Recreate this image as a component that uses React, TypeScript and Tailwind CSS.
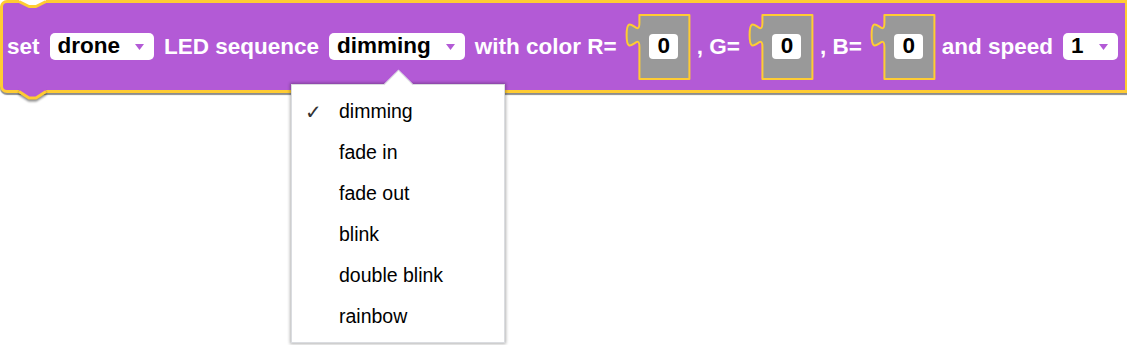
import React from "react"

const PURPLE = "#b35ad6"

function Dropdown({ label }: { label: string }) {
  return (
    <div className="flex h-[27px] shrink-0 items-center rounded-[5px] bg-white pl-[8px] pr-[10px] text-black">
      <span className="leading-none">{label}</span>
      <svg className="ml-[15px]" width="9" height="6" viewBox="0 0 9 6">
        <path d="M0 0 L9 0 L4.5 6 Z" fill={PURPLE} />
      </svg>
    </div>
  )
}

function Slot() {
  return (
    <div className="relative -mr-[2px] flex h-[64px] w-[62px] shrink-0 items-center justify-center pl-[12px]">
      <svg className="absolute left-0 top-0 overflow-visible" width="62" height="64" viewBox="-7.75 0 38.75 40">
        <path
          d="M 0,0 V 5 c 0,10 -8,-8 -8,7.5 s 8,-2.5 8,7.5 V 40 H 31.25 V 0 Z"
          fill="#999999"
          stroke="#ffcc33"
          strokeWidth="1.25"
          strokeLinejoin="round"
        />
      </svg>
      <div className="relative flex h-[25px] w-[29px] items-center justify-center rounded-[4px] bg-white leading-none text-black">
        0
      </div>
    </div>
  )
}

const options = ["dimming", "fade in", "fade out", "blink", "double blink", "rainbow"]

export default function App() {
  return (
    <div className="relative h-[345px] w-[1127px] overflow-hidden bg-white font-['Liberation_Sans',Arial,sans-serif]">
      {/* block */}
      <div className="relative inline-flex">
        <div className="flex h-[93px] items-center gap-[10px] whitespace-nowrap rounded-l-[7px] border-[3px] border-[#ffcc33] bg-[#b35ad6] pl-[4px] pr-[7px] text-[22.5px] font-bold text-white shadow-[0_2px_1px_rgba(0,0,0,0.45)]">
          <span>set</span>
          <Dropdown label="drone" />
          <span>LED sequence</span>
          <Dropdown label="dimming" />
          <span>with color R=</span>
          <Slot />
          <span>, G=</span>
          <Slot />
          <span>, B=</span>
          <Slot />
          <span>and speed</span>
          <Dropdown label="1" />
        </div>
        {/* top notch */}
        <svg className="absolute left-0 top-0" width="60" height="12" viewBox="0 0 60 12">
          <path d="M 19,-1 L 19,1.5 L 29,6.5 L 36,6.5 L 46,1.5 L 46,-1 Z" fill="white" />
          <path d="M 19,1.5 L 29,6.5 L 36,6.5 L 46,1.5" fill="none" stroke="#ffcc33" strokeWidth="3" strokeLinejoin="round" />
        </svg>
        {/* bottom tab */}
        <svg className="absolute left-0 top-[86px] drop-shadow-[0_2px_1px_rgba(0,0,0,0.45)]" width="60" height="16" viewBox="0 86 60 16">
          <path d="M 19,89 L 19,91.5 L 29,98 L 36,98 L 46,91.5 L 46,89 Z" fill={PURPLE} />
          <path d="M 19,91.5 L 29,98 L 36,98 L 46,91.5" fill="none" stroke="#ffcc33" strokeWidth="3" strokeLinejoin="round" />
        </svg>
      </div>

      {/* dropdown menu */}
      <div className="absolute left-[291px] top-[84px] w-[214px] border border-[#dadce0] bg-white pb-[5px] pt-[6px] shadow-[0_0_3px_1px_rgba(0,0,0,0.3)]">
        <div className="absolute -top-[11px] left-[96px] h-[21px] w-[21px] rotate-45 border-l border-t border-[#dadce0] bg-white" />
        <div className="relative">
          {options.map((opt, i) => (
            <div key={opt} className="flex h-[41px] items-center text-[19.5px] text-black">
              <span className="w-[47px] pl-[13px] font-['DejaVu_Sans',sans-serif] text-[20px] italic text-[#333]">
                {i === 0 ? "✓" : ""}
              </span>
              <span>{opt}</span>
            </div>
          ))}
        </div>
      </div>
    </div>
  )
}
